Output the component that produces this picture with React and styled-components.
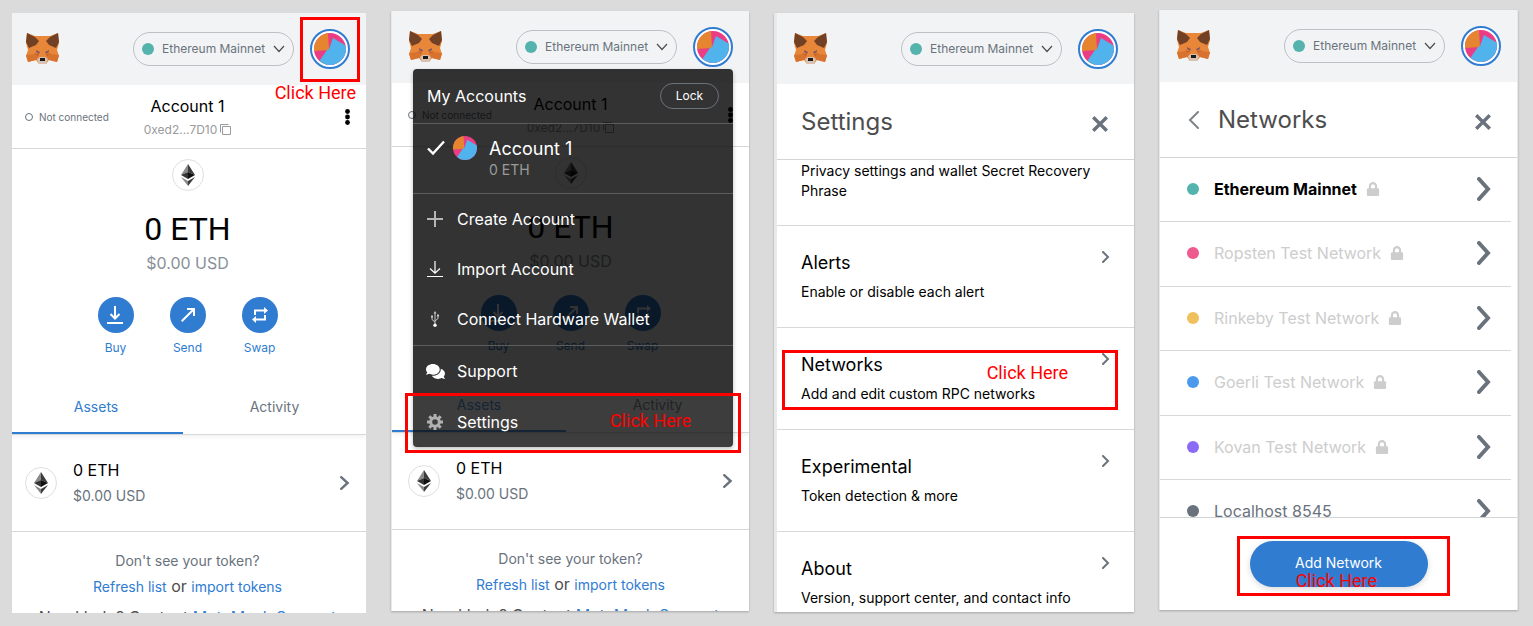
import React from 'react';
import styled, { createGlobalStyle } from 'styled-components';
import { FaComments, FaLock } from 'react-icons/fa';

const GlobalStyle = createGlobalStyle`
  *, *::before, *::after { box-sizing: border-box; }
  body {
    margin: 0;
    background: #dbdbdb;
    color: #000;
    font-family: Inter, "Liberation Sans", sans-serif;
    font-size: 16px;
    line-height: 20px;
  }
  h1, h2, h3, p, ul { margin: 0; padding: 0; font-weight: 400; }
  ul { list-style: none; }
  button { padding: 0; border: 0; background: none; color: inherit; font: inherit; cursor: pointer; }
  a { color: #2f7cd1; text-decoration: none; }
  svg { display: block; flex: none; }
`;

/* ---------- Page and popup frames ---------- */

const Page = styled.main`
  display: grid;
  grid-template-columns: 354fr 358fr 360fr 359fr;
  grid-template-rows: minmax(0, 1fr);
  column-gap: 25px;
  height: 100vh;
  padding: 0 15px 0 12px;
`;

const Popup = styled.section`
  position: relative;
  display: flex;
  flex-direction: column;
  min-width: 0;
  min-height: 0;
  margin-top: ${(p) => p.$top}px;
  margin-bottom: ${(p) => p.$bottom}px;
  background: #fff;
  overflow: hidden;
  ${(p) => p.$edge && `border-left: ${p.$edge}px solid #e9e9ea;`}
  ${(p) => p.$edgeRight && `border-right: ${p.$edgeRight}px solid #e9e9ea;`}
  ${(p) => p.$shadow && 'box-shadow: 0 1px 2px rgba(0, 0, 0, 0.25);'}
`;

const Screen = styled.div`
  display: flex;
  flex: 1;
  flex-direction: column;
  min-height: 0;
  margin-left: ${(p) => (p.$cropLeft ? '-3px' : '0')};
`;

/* ---------- App header ---------- */

const Header = styled.header`
  display: flex;
  flex: none;
  align-items: center;
  gap: 16px;
  height: ${(p) => (p.$short ? 71 : 72)}px;
  padding: 0 16px 0 17px;
  background: #f2f3f5;
`;

const NetworkPill = styled.button`
  display: flex;
  align-items: center;
  gap: 8px;
  width: 161px;
  height: 34px;
  margin-left: auto;
  padding: 0 8px;
  border: 1px solid #bbc0c5;
  border-radius: 17px;
  color: #6a737d;
  font-size: 12px;
  white-space: nowrap;
  svg { margin-left: auto; }
`;

const Dot = styled.span`
  flex: none;
  width: 12px;
  height: 12px;
  border-radius: 50%;
  background: ${(p) => p.$color};
`;

const AvatarButton = styled.button`
  display: flex;
  align-items: center;
  justify-content: center;
  width: 40px;
  height: 40px;
  border: 2px solid #2f7cd1;
  border-radius: 50%;
  background: #fff;
`;

/* ---------- Home screen ---------- */

const AccountBar = styled.div`
  display: grid;
  flex: none;
  grid-template-columns: 1fr auto 1fr;
  align-items: center;
  height: 64px;
  padding: 0 16px;
  border-bottom: 1px solid #d6d9dc;
`;

const Status = styled.span`
  display: flex;
  align-items: center;
  gap: 6px;
  color: #6a737d;
  font-size: 10px;
  &::before {
    content: "";
    width: 8px;
    height: 8px;
    border: 1px solid #6a737d;
    border-radius: 50%;
  }
`;

const AccountButton = styled.button`
  display: flex;
  flex-direction: column;
  align-items: center;
  gap: 4px;
  padding-top: 2px;
`;

const Address = styled.span`
  display: flex;
  align-items: center;
  gap: 3px;
  color: #989a9b;
  font-size: 12px;
`;

const MenuDots = styled.button`
  display: flex;
  justify-self: end;
  justify-content: center;
  width: 6px;
`;

const Balance = styled.div`
  display: flex;
  flex: none;
  flex-direction: column;
  align-items: center;
  padding-top: 10px;
`;

const TokenBadge = styled.span`
  display: flex;
  flex: none;
  align-items: center;
  justify-content: center;
  width: 32px;
  height: 32px;
  border: 1px solid #dddfe1;
  border-radius: 50%;
  background: #fff;
`;

const Amount = styled.p`
  margin-top: 16px;
  font-family: Roboto, sans-serif;
  font-size: 32px;
  line-height: 44px;
`;

const Fiat = styled.p`
  margin-top: 2px;
  color: #888f98;
`;

const Actions = styled.div`
  display: flex;
  justify-content: center;
  gap: 36px;
  margin-top: 24px;
`;

const Action = styled.button`
  display: flex;
  flex-direction: column;
  align-items: center;
  gap: 5px;
  width: 36px;
  color: #2f7cd1;
  font-size: 12px;
`;

const ActionDisc = styled.span`
  display: flex;
  align-items: center;
  justify-content: center;
  width: 36px;
  height: 36px;
  border-radius: 50%;
  background: #2f7cd1;
`;

const Tabs = styled.div`
  display: flex;
  flex: none;
  height: 57px;
  margin-top: 20px;
  border-bottom: 1px solid #d6d9dc;
  box-shadow: 0 2px 4px rgba(0, 0, 0, 0.06);
`;

const Tab = styled.button`
  flex: ${(p) => (p.$active ? 174 : 183)};
  padding-top: 4px;
  border-bottom: 2px solid ${(p) => (p.$active ? '#2f7cd1' : 'transparent')};
  color: ${(p) => (p.$active ? '#2f7cd1' : '#6a737d')};
  font-size: 14px;
`;

const Asset = styled.button`
  display: flex;
  flex: none;
  align-items: center;
  gap: 16px;
  height: 97px;
  padding: 0 16px;
  border-bottom: 1px solid #d6d9dc;
  text-align: left;
`;

const AssetText = styled.span`
  display: flex;
  flex: 1;
  flex-direction: column;
  gap: 6px;
`;

const Small = styled.span`
  color: ${(p) => p.$color || '#6a737d'};
  font-size: 14px;
`;

const TokenHelp = styled.div`
  display: flex;
  flex: none;
  flex-direction: column;
  align-items: center;
  gap: 5px;
  padding-top: 19px;
  color: #4d4d4d;
  a { font-size: 14px; line-height: 14px; }
`;

const Support = styled.p`
  margin-top: 6px;
  white-space: nowrap;
  a { font-size: 16px; }
`;

/* ---------- Accounts menu ---------- */

const Menu = styled.nav`
  position: absolute;
  top: 58px;
  right: 16px;
  width: 320px;
  border-radius: 4px;
  background: rgba(0, 0, 0, 0.8);
  box-shadow: 0 2px 4px rgba(0, 0, 0, 0.25);
  color: #fff;
  overflow: hidden;
`;

const MenuHeader = styled.div`
  display: flex;
  align-items: center;
  justify-content: space-between;
  height: 55px;
  padding: 0 14px;
  border-bottom: 1px solid #5c5d5e;
`;

const LockButton = styled.button`
  width: 59px;
  height: 26px;
  border: 1px solid #6a737d;
  border-radius: 13px;
  font-size: 12px;
`;

const MenuAccount = styled.button`
  display: flex;
  align-items: flex-start;
  width: 100%;
  height: 70px;
  padding: 12px 14px;
  border-bottom: 1px solid #5c5d5e;
  text-align: left;
`;

const MenuAvatar = styled.span`
  margin: 0 12px 0 8px;
`;

const MenuAccountText = styled.span`
  display: flex;
  flex-direction: column;
  font-size: 18px;
  line-height: 26px;
  ${Small} { line-height: 16px; }
`;

const MenuItem = styled.button`
  display: flex;
  align-items: center;
  gap: 14px;
  width: 100%;
  height: ${(p) => (p.$last ? 51 : 50)}px;
  padding: 0 14px;
  background: ${(p) => (p.$active ? 'rgba(255, 255, 255, 0.05)' : 'none')};
`;

const MenuGroup = styled.div`
  padding-bottom: 1px;
  border-bottom: 1px solid #5c5d5e;
`;

const MenuIcon = styled.span`
  display: flex;
  justify-content: center;
  width: 16px;
`;

/* ---------- Settings and networks screens ---------- */

const TitleBar = styled.div`
  display: flex;
  flex: none;
  align-items: center;
  gap: 19px;
  height: 76px;
  padding: 0 26px 0 ${(p) => (p.$back ? 28 : 24)}px;
  border-bottom: 1px solid #d2d5d7;
`;

const Title = styled.h1`
  flex: 1;
  color: #4d4d4d;
  font-size: 24px;
  line-height: 28px;
`;

const CloseButton = styled.button`
  padding-top: 4px;
`;

const SettingsList = styled.ul`
  display: flex;
  flex: 1;
  flex-direction: column;
  min-height: 0;
  overflow: hidden;
`;

const SettingsRow = styled.li`
  flex: none;
  height: 102px;
  border-bottom: 1px solid #d6d9dc;
`;

const SettingsButton = styled.button`
  display: flex;
  align-items: flex-start;
  width: 100%;
  padding: 25px 24px 0;
  text-align: left;
`;

const SettingsText = styled.span`
  display: flex;
  flex: 1;
  flex-direction: column;
  gap: 7px;
  font-size: 18px;
  line-height: 24px;
`;

const Description = styled.span`
  font-size: 14px;
  line-height: 20px;
`;

const ScrolledRow = styled.li`
  flex: none;
  height: 66px;
  padding: 1px 24px 0;
  border-bottom: 1px solid #d6d9dc;
  font-size: 14px;
`;

const NetworkList = styled.ul`
  flex: 1;
  min-height: 0;
  margin-right: 6px;
  overflow: hidden;
`;

const NetworkRow = styled.li`
  height: 64px;
  border-bottom: 1px solid #d6d9dc;
  &:nth-child(even) { height: 65px; }
`;

const NetworkButton = styled.button`
  display: flex;
  align-items: center;
  width: 100%;
  height: 100%;
  padding: 0 19px 2px 27px;
  color: ${(p) => p.$color};
  font-weight: ${(p) => (p.$selected ? 700 : 400)};
`;

const NetworkName = styled.span`
  margin: 0 9px 0 15px;
`;

const NetworkArrow = styled.span`
  margin-left: auto;
`;

const Footer = styled.footer`
  display: flex;
  flex: none;
  justify-content: center;
  height: 93px;
  padding-top: 23px;
  border-top: 1px solid #d2d5d7;
`;

const PrimaryButton = styled.button`
  width: 178px;
  height: 46px;
  padding-bottom: 2px;
  border-radius: 23px;
  background: #2f7cd1;
  box-shadow: 0 2px 6px rgba(0, 0, 0, 0.15);
  color: #fff;
  font-size: 14px;
`;

/* ---------- Tutorial marks laid over the popups ---------- */

const Highlight = styled.div`
  position: absolute;
  top: ${(p) => p.$top}px;
  right: ${(p) => p.$right}px;
  width: ${(p) => p.$width}px;
  height: ${(p) => p.$height}px;
  border: 3px solid #f00;
  pointer-events: none;
`;

const ClickHere = styled.span`
  position: absolute;
  top: ${(p) => p.$top}px;
  right: ${(p) => p.$right}px;
  color: #f00;
  font-family: Roboto, sans-serif;
  font-size: 18px;
  pointer-events: none;
`;

/* ---------- Icons ---------- */

const Fox = () => (
  <svg width="33" height="32" viewBox="0 0 33 32" aria-hidden="true">
    <path d="M1 0 L9 3 H24 L32 0 L33 10 L31 17 L33 23 L31 29 L23 27 L20 31 H13 L10 27 L2 29 L0 23 L2 17 L0 10Z" fill="#e8873a" />
    <path d="M0 22 L9 21 L13 26 L10 27 L2 29Z M33 22 L24 21 L20 26 L23 27 L31 29Z" fill="#d8722f" />
    <path d="M1 0 L9 4 L13 8 L10 12 L3 15 L0 9Z M32 0 L24 4 L20 8 L23 12 L30 15 L33 9Z" fill="#724125" />
    <path d="M10 17 L14 19 L13 21 L10 19Z M23 17 L19 19 L20 21 L23 19Z" fill="#8a5a5e" />
    <path d="M8 20 L13 21 L12 24Z M25 20 L20 21 L21 24Z" fill="#c96330" />
    <path d="M11 26 L14 24 H19 L22 26 L20 31 H13Z" fill="#d7c2b3" />
    <path d="M14 25 H19 V28 H14Z" fill="#1d1a1a" />
  </svg>
);

const Blockie = ({ size }) => (
  <svg width={size} height={size} viewBox="0 0 32 32" aria-hidden="true">
    <clipPath id={`disc${size}`}><circle cx="16" cy="16" r="16" /></clipPath>
    <g clipPath={`url(#disc${size})`}>
      <rect width="32" height="32" fill="#ea3d84" />
      <path d="M0 0 H14 L15 17 L0 18Z" fill="#e5852f" />
      <path d="M19 5 L34 14 V34 H2 L6 27 L13 17 L15 16Z" fill="#51b3eb" />
    </g>
  </svg>
);

const Ether = () => (
  <svg width="14" height="22" viewBox="0 0 14 22" aria-hidden="true">
    <path d="M7 0 V8 L0 11Z" fill="#8a8a8a" />
    <path d="M7 0 V8 L14 11Z" fill="#3c3c3b" />
    <path d="M7 8 V15 L0 11Z" fill="#343434" />
    <path d="M7 8 V15 L14 11Z" fill="#101010" />
    <path d="M0 13 L7 17 V22Z" fill="#8a8a8a" />
    <path d="M14 13 L7 17 V22Z" fill="#3c3c3b" />
  </svg>
);

const Chevron = ({ width, height, stroke = 2, color = '#6a737d', left }) => (
  <svg width={width} height={height} viewBox={`0 0 ${width} ${height}`} fill="none" stroke={color} strokeWidth={stroke} strokeLinecap="round" aria-hidden="true">
    <path
      d={
        left
          ? `M${width - stroke / 2} ${stroke / 2} L${stroke} ${height / 2} L${width - stroke / 2} ${height - stroke / 2}`
          : `M${stroke / 2} ${stroke / 2} L${width - stroke} ${height / 2} L${stroke / 2} ${height - stroke / 2}`
      }
    />
  </svg>
);

const ChevronDown = () => (
  <svg width="12" height="8" viewBox="0 0 12 8" fill="none" stroke="#4d4d4d" strokeWidth="1.2" aria-hidden="true">
    <path d="M1 1 L6 6.5 L11 1" />
  </svg>
);

const CopyIcon = () => (
  <svg width="11" height="11" viewBox="0 0 11 11" fill="none" stroke="#989a9b" aria-hidden="true">
    <path d="M.5 8.5 V.5 H8.5 M2.5 2.5 H10.5 V10.5 H2.5Z" />
  </svg>
);

const DotsIcon = () => (
  <svg width="5" height="16" viewBox="0 0 5 16" aria-hidden="true">
    <circle cx="2.5" cy="2.5" r="2.4" />
    <circle cx="2.5" cy="8" r="2.4" />
    <circle cx="2.5" cy="13.5" r="2.4" />
  </svg>
);

const CloseIcon = () => (
  <svg width="16" height="16" viewBox="0 0 16 16" fill="none" stroke="#6a737d" strokeWidth="3.4" aria-hidden="true">
    <path d="M1.2 1.2 L14.8 14.8 M14.8 1.2 L1.2 14.8" />
  </svg>
);

const BuyIcon = () => (
  <svg width="18" height="20" viewBox="0 0 18 20" fill="none" stroke="#fff" strokeWidth="2" aria-hidden="true">
    <path d="M8 1 V13 M3.5 9 L8 13.5 L12.5 9 M0 18 H16" />
  </svg>
);

const SendIcon = () => (
  <svg width="14" height="14" viewBox="0 0 14 14" fill="none" stroke="#fff" strokeWidth="2" aria-hidden="true">
    <path d="M.7 13.3 L12.5 1.5 M6 1 H13 V8" />
  </svg>
);

const SwapIcon = () => (
  <svg width="16" height="18" viewBox="0 0 16 18" aria-hidden="true">
    <path d="M3 9 V4.5 H12 M13 9 V13.5 H4" fill="none" stroke="#fff" strokeWidth="2" />
    <path d="M12 1 L16 4.5 L12 8Z M4 10 L0 13.5 L4 17Z" fill="#fff" />
  </svg>
);

const CheckIcon = () => (
  <svg width="18" height="24" viewBox="0 0 18 24" fill="none" stroke="#fff" strokeWidth="2.4" aria-hidden="true">
    <path d="M1 12.5 L6 17.5 L17 5.5" />
  </svg>
);

const PlusIcon = () => (
  <svg width="16" height="16" viewBox="0 0 16 16" fill="none" stroke="#b5b5b5" strokeWidth="2" aria-hidden="true">
    <path d="M8 0 V16 M0 8 H16" />
  </svg>
);

const ImportIcon = () => (
  <svg width="16" height="17" viewBox="0 0 16 17" fill="none" stroke="#fff" strokeWidth="1.2" aria-hidden="true">
    <path d="M8 0 V12 M3 7.5 L8 12.2 L13 7.5 M0 15.5 H16" />
  </svg>
);

const UsbIcon = () => (
  <svg width="8" height="16" viewBox="0 0 8 16" fill="none" stroke="#c8c8c8" aria-hidden="true">
    <path d="M4 2 V14 M1 6 V8.5 L4 11 M7 5 V7.5 L4 10" />
    <path d="M4 0 L5.5 2.5 H2.5Z M0 4.5 H2 V6.5 H0Z M6 3.5 H8 V5.5 H6Z" fill="#c8c8c8" stroke="none" />
    <circle cx="4" cy="14.3" r="1.7" fill="#fff" stroke="none" />
  </svg>
);

const GearIcon = () => (
  <svg width="16" height="16" viewBox="0 0 16 16" fill="none" stroke="#b0b0b0" aria-hidden="true">
    <circle cx="8" cy="8" r="4.3" strokeWidth="3" />
    <path d="M8 0 V3 M8 13 V16 M0 8 H3 M13 8 H16 M2.3 2.3 L4.5 4.5 M11.5 11.5 L13.7 13.7 M2.3 13.7 L4.5 11.5 M11.5 4.5 L13.7 2.3" strokeWidth="3" />
  </svg>
);

/* ---------- Composed parts ---------- */

const AppHeader = ({ short }) => (
  <Header $short={short}>
    <Fox />
    <NetworkPill type="button">
      <Dot $color="#55b3ad" />
      Ethereum Mainnet
      <ChevronDown />
    </NetworkPill>
    <AvatarButton type="button" aria-label="Account menu">
      <Blockie size={32} />
    </AvatarButton>
  </Header>
);

const Home = ({ cropLeft }) => (
  <Screen $cropLeft={cropLeft}>
    <AppHeader />
    <AccountBar>
      <Status>Not connected</Status>
      <AccountButton type="button">
        <span>Account 1</span>
        <Address>0xed2...7D10<CopyIcon /></Address>
      </AccountButton>
      <MenuDots type="button" aria-label="Account options"><DotsIcon /></MenuDots>
    </AccountBar>
    <Balance>
      <TokenBadge><Ether /></TokenBadge>
      <Amount>0 ETH</Amount>
      <Fiat>$0.00 USD</Fiat>
      <Actions>
        <Action type="button"><ActionDisc><BuyIcon /></ActionDisc>Buy</Action>
        <Action type="button"><ActionDisc><SendIcon /></ActionDisc>Send</Action>
        <Action type="button"><ActionDisc><SwapIcon /></ActionDisc>Swap</Action>
      </Actions>
    </Balance>
    <Tabs>
      <Tab type="button" $active>Assets</Tab>
      <Tab type="button">Activity</Tab>
    </Tabs>
    <Asset type="button">
      <TokenBadge><Ether /></TokenBadge>
      <AssetText>
        <span>0 ETH</span>
        <Small>$0.00 USD</Small>
      </AssetText>
      <Chevron width={10} height={14} stroke={2.4} />
    </Asset>
    <TokenHelp>
      <Small>Don't see your token?</Small>
      <p><a href="#refresh">Refresh list</a> or <a href="#import">import tokens</a></p>
      <Support>Need help? Contact <a href="#support">MetaMask Support</a></Support>
    </TokenHelp>
  </Screen>
);

const AccountsMenu = () => (
  <Menu>
    <MenuHeader>
      My Accounts
      <LockButton type="button">Lock</LockButton>
    </MenuHeader>
    <MenuAccount type="button">
      <CheckIcon />
      <MenuAvatar><Blockie size={24} /></MenuAvatar>
      <MenuAccountText>
        Account 1
        <Small $color="#9b9b9b">0 ETH</Small>
      </MenuAccountText>
    </MenuAccount>
    <MenuGroup>
      <MenuItem type="button"><MenuIcon><PlusIcon /></MenuIcon>Create Account</MenuItem>
      <MenuItem type="button"><MenuIcon><ImportIcon /></MenuIcon>Import Account</MenuItem>
      <MenuItem type="button"><MenuIcon><UsbIcon /></MenuIcon>Connect Hardware Wallet</MenuItem>
    </MenuGroup>
    <MenuItem type="button"><MenuIcon><FaComments size={19} /></MenuIcon>Support</MenuItem>
    <MenuItem type="button" $active $last><MenuIcon><GearIcon /></MenuIcon>Settings</MenuItem>
  </Menu>
);

const SETTINGS = [
  ['Alerts', 'Enable or disable each alert'],
  ['Networks', 'Add and edit custom RPC networks'],
  ['Experimental', 'Token detection & more'],
  ['About', 'Version, support center, and contact info'],
];

const SettingsScreen = () => (
  <Screen>
    <AppHeader short />
    <TitleBar>
      <Title>Settings</Title>
      <CloseButton type="button" aria-label="Close"><CloseIcon /></CloseButton>
    </TitleBar>
    <SettingsList>
      <ScrolledRow>Privacy settings and wallet Secret Recovery Phrase</ScrolledRow>
      {SETTINGS.map(([name, text]) => (
        <SettingsRow key={name}>
          <SettingsButton type="button">
            <SettingsText>
              {name}
              <Description>{text}</Description>
            </SettingsText>
            <Chevron width={8} height={12} />
          </SettingsButton>
        </SettingsRow>
      ))}
    </SettingsList>
  </Screen>
);

const NETWORKS = [
  { name: 'Ethereum Mainnet', dot: '#55b3ad', color: '#000', locked: true, selected: true },
  { name: 'Ropsten Test Network', dot: '#ee5a8d', color: '#cdcdcd', locked: true },
  { name: 'Rinkeby Test Network', dot: '#f0c05c', color: '#cdcdcd', locked: true },
  { name: 'Goerli Test Network', dot: '#4b99ed', color: '#cdcdcd', locked: true },
  { name: 'Kovan Test Network', dot: '#8b6af5', color: '#cdcdcd', locked: true },
  { name: 'Localhost 8545', dot: '#6a737d', color: '#6a737d' },
];

const NetworksScreen = () => (
  <Screen>
    <AppHeader />
    <TitleBar $back>
      <button type="button" aria-label="Back"><Chevron width={11} height={18} stroke={2} color="#808488" left /></button>
      <Title>Networks</Title>
      <CloseButton type="button" aria-label="Close"><CloseIcon /></CloseButton>
    </TitleBar>
    <NetworkList>
      {NETWORKS.map((n) => (
        <NetworkRow key={n.name}>
          <NetworkButton type="button" $color={n.color} $selected={n.selected}>
            <Dot $color={n.dot} />
            <NetworkName>{n.name}</NetworkName>
            {n.locked && <FaLock size={14} color="#cdcdcd" />}
            <NetworkArrow><Chevron width={15} height={24} stroke={4} /></NetworkArrow>
          </NetworkButton>
        </NetworkRow>
      ))}
    </NetworkList>
    <Footer>
      <PrimaryButton type="button">Add Network</PrimaryButton>
    </Footer>
  </Screen>
);

export default function App() {
  return (
    <>
      <GlobalStyle />
      <Page>
        <Popup $top={13} $bottom={13}>
          <Home cropLeft />
          <Highlight $top={4} $right={6} $width={60} $height={65} />
          <ClickHere $top={70} $right={10}>Click Here</ClickHere>
        </Popup>
        <Popup $top={11} $bottom={15} $edge={1} $shadow>
          <Home />
          <AccountsMenu />
          <Highlight $top={382} $right={8} $width={336} $height={60} />
          <ClickHere $top={400} $right={58}>Click Here</ClickHere>
        </Popup>
        <Popup $top={13} $bottom={14} $edge={3} $shadow>
          <SettingsScreen />
          <Highlight $top={337} $right={16} $width={336} $height={60} />
          <ClickHere $top={350} $right={66}>Click Here</ClickHere>
        </Popup>
        <Popup $top={10} $bottom={16} $edge={1} $edgeRight={1} $shadow>
          <NetworksScreen />
          <Highlight $top={526} $right={67} $width={213} $height={60} />
          <ClickHere $top={561} $right={140}>Click Here</ClickHere>
        </Popup>
      </Page>
    </>
  );
}
